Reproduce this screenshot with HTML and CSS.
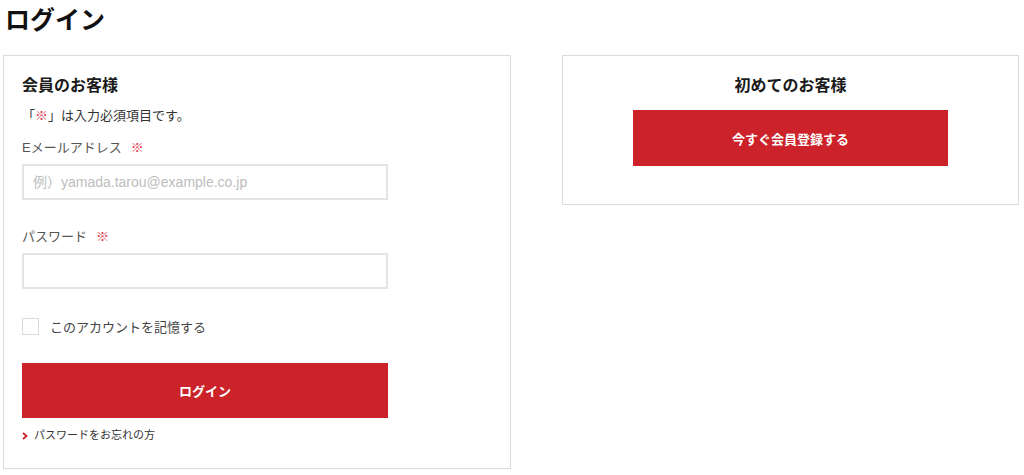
FILE: index.html
```html
<!DOCTYPE html>
<html lang="ja">
<head>
<meta charset="utf-8">
<title>ログイン</title>
<link rel="stylesheet" href="styles.css">
</head>
<body>
<h1 class="page-title">ログイン</h1>
<div class="columns">
  <section class="box member">
    <h2 class="box-title">会員のお客様</h2>
    <p class="note">「<span class="req">※</span>」は入力必須項目です。</p>
    <div class="field">
      <label class="label" for="email">Eメールアドレス<span class="req">※</span></label>
      <input class="input" id="email" type="text" placeholder="例）yamada.tarou@example.co.jp">
    </div>
    <div class="field">
      <label class="label" for="pw">パスワード<span class="req">※</span></label>
      <input class="input" id="pw" type="password">
    </div>
    <label class="remember"><span class="checkbox"></span><span>このアカウントを記憶する</span></label>
    <button class="btn btn-login" type="button">ログイン</button>
    <a class="forgot" href="#"><svg class="chev" width="6" height="8" viewBox="0 0 6 8"><path d="M1 1 L4.5 4 L1 7" fill="none" stroke="#cc2229" stroke-width="1.8"/></svg>パスワードをお忘れの方</a>
  </section>
  <section class="box newbie">
    <h2 class="box-title center">初めてのお客様</h2>
    <button class="btn btn-register" type="button">今すぐ会員登録する</button>
  </section>
</div>
</body>
</html>
```

FILE: styles.css
```css
* { box-sizing: border-box; }
body {
  margin: 0;
  padding: 0 5px 0 3px;
  background: #fff;
  color: #222;
  font-family: "Liberation Sans", "Noto Sans CJK JP", sans-serif;
}
.page-title {
  margin: 0;
  padding-left: 2px;
  font-size: 25px;
  font-weight: 700;
  line-height: 36px;
  color: #111;
  font-family: "Noto Sans CJK JP", sans-serif;
}
.columns {
  display: flex;
  align-items: flex-start;
  gap: 51px;
  margin-top: 19px;
}
.box {
  border: 1px solid #dcdcdc;
  background: #fff;
}
.member {
  width: 508px;
  padding: 16px 18px 25px 18px;
}
.newbie {
  width: 457px;
  padding: 16px 18px 38px;
  display: flex;
  flex-direction: column;
  align-items: center;
}
.box-title {
  margin: 0;
  font-size: 16px;
  font-weight: 700;
  line-height: 24px;
  color: #1a1a1a;
  font-family: "Noto Sans CJK JP", sans-serif;
}
.note {
  margin: 10px 0 12px;
  font-size: 13px;
  line-height: 20px;
  color: #333;
}
.req {
  color: #dd3a4c;
  margin-left: 9px;
}
.note .req { margin-left: 0; }
.field {
  margin-bottom: 27px;
}
.label {
  display: block;
  font-size: 13px;
  line-height: 20px;
  color: #555;
  margin-bottom: 6px;
}
.input {
  display: block;
  width: 366px;
  height: 36px;
  border: 2px solid #e4e4e4;
  padding: 0 9px;
  font-size: 14px;
  font-family: "Liberation Sans", "Noto Sans CJK JP", sans-serif;
  color: #333;
  outline: none;
  background: #fff;
}
.input::placeholder { color: #bdbdbd; }
.remember {
  display: flex;
  align-items: center;
  height: 20px;
  font-size: 13px;
  color: #444;
}
.checkbox {
  width: 17px;
  height: 17px;
  border: 1px solid #dadada;
  margin-right: 11px;
  background: #fff;
}
.btn {
  display: block;
  border: none;
  background: #cc2229;
  color: #fff;
  font-size: 13px;
  font-weight: 700;
  font-family: "Noto Sans CJK JP", sans-serif;
  cursor: pointer;
}
.btn-login {
  width: 366px;
  height: 55px;
  margin-top: 27px;
}
.btn-register {
  width: 315px;
  height: 56px;
  margin-top: 14px;
}
.forgot {
  display: flex;
  align-items: center;
  margin-top: 7px;
  height: 18px;
  font-size: 11px;
  color: #333;
  text-decoration: none;
}
.chev {
  margin-right: 6px;
  margin-top: 3px;
}
```
